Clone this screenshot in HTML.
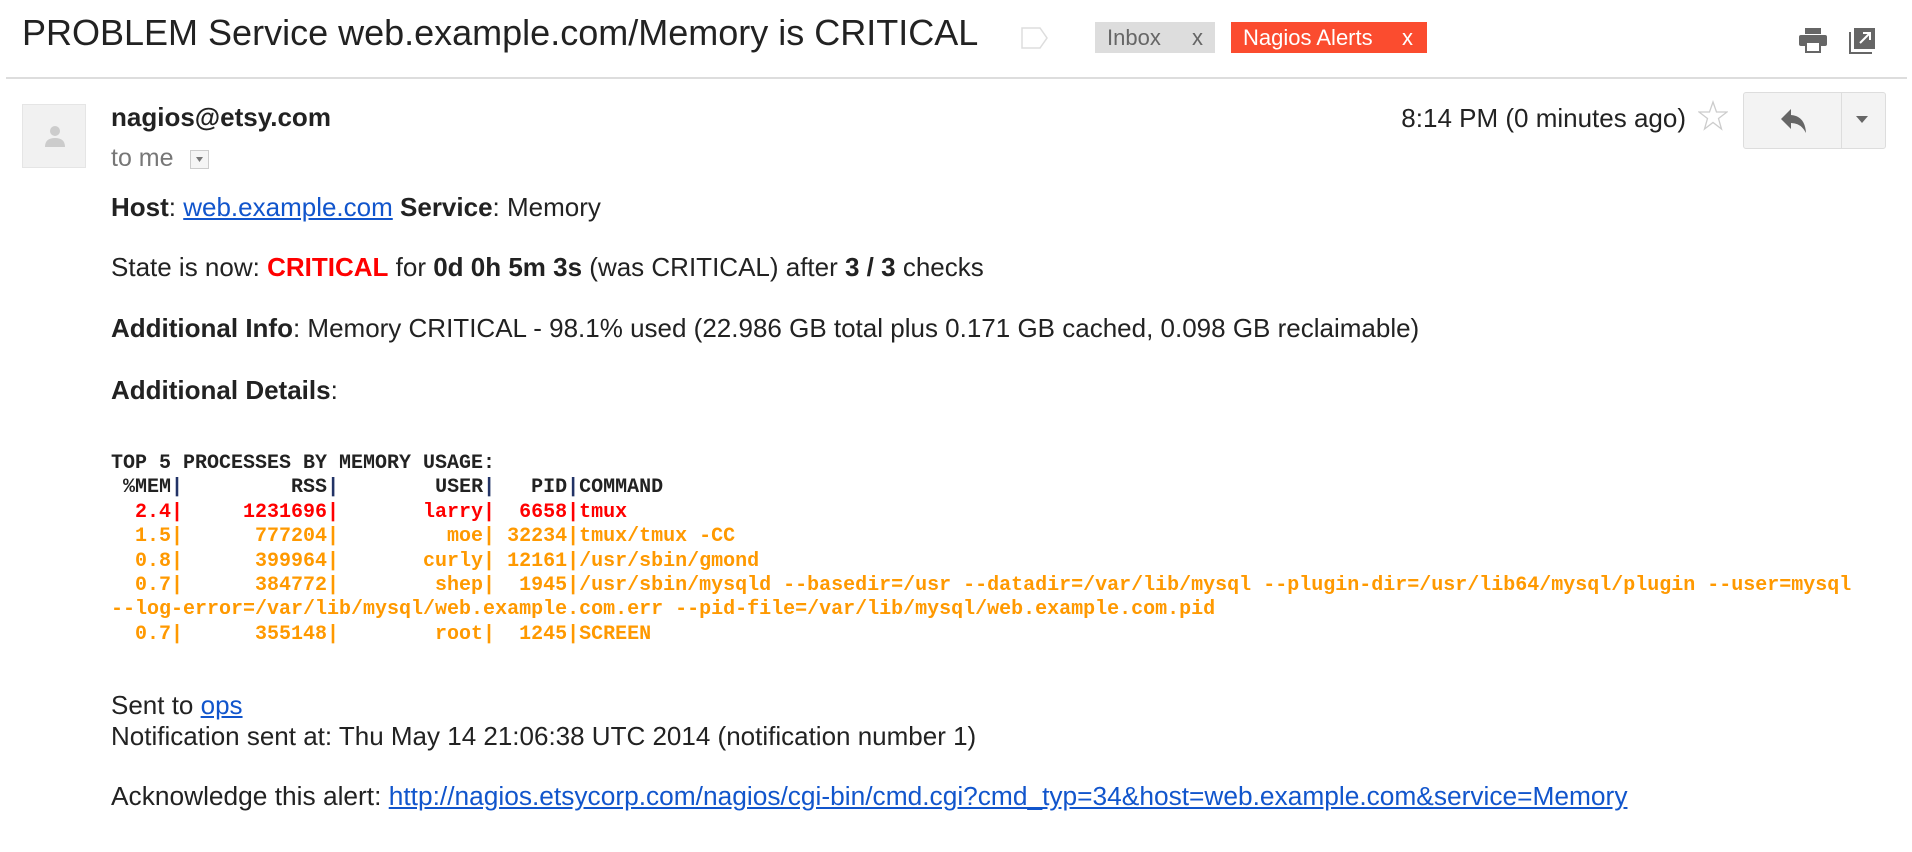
<!DOCTYPE html>
<html><head><meta charset="utf-8"><style>
html,body{margin:0;padding:0;background:#fff;width:1912px;height:852px;overflow:hidden;font-family:"Liberation Sans",Arial,sans-serif;color:#222}
.abs{position:absolute}
.title{left:22px;top:12px;font-size:36px;color:#222;white-space:nowrap}
.tag{top:22px;height:31px;line-height:31px;font-size:22px;padding:0 12px;box-sizing:border-box}
.hr{left:6px;top:77px;width:1901px;height:2px;background:#ddd}
.body{font-size:26px;color:#222;white-space:nowrap}
a{color:#15c;text-decoration:underline}
pre{margin:0;font-family:"Liberation Mono","Courier New",monospace;font-size:20px;line-height:24.4px;font-weight:bold}
.r{color:#f00}.o{color:#f90}
</style></head><body>
<div class="abs title">PROBLEM Service web.example.com/Memory is CRITICAL</div>
<svg class="abs" style="left:1021px;top:27px" width="28" height="22"><path d="M1 1H19L26 11L19 21H1Z" fill="#fff" stroke="#ddd" stroke-width="1.5"/></svg>
<div class="abs tag" style="left:1095px;width:120px;background:#ddd;color:#666">Inbox<span style="position:absolute;right:12px">x</span></div>
<div class="abs tag" style="left:1231px;width:196px;background:#fb4c2f;color:#fff">Nagios Alerts<span style="position:absolute;right:14px">x</span></div>
<svg class="abs" style="left:1798px;top:27px" width="30" height="26" viewBox="0 0 30 26"><rect x="7" y="1" width="16" height="6" fill="#666"/><rect x="1" y="8" width="28" height="11" rx="2" fill="#666"/><rect x="8" y="15" width="14" height="10" fill="#fff" stroke="#666" stroke-width="2"/></svg>
<svg class="abs" style="left:1849px;top:27px" width="28" height="28" viewBox="0 0 28 28"><rect x="5" y="1" width="21" height="21" fill="#666"/><path d="M1 5V26H23" fill="none" stroke="#666" stroke-width="2"/><path d="M11 16L21 6M14 6H21V13" fill="none" stroke="#fff" stroke-width="2"/></svg>
<div class="abs hr"></div>
<div class="abs" style="left:22px;top:104px;width:64px;height:64px;background:#f1f1f1;border:1px solid #e5e5e5;box-sizing:border-box">
<svg width="62" height="62"><circle cx="32" cy="26" r="5" fill="#ccc"/><path d="M22 42Q22 33 32 33Q42 33 42 42Z" fill="#ccc"/></svg></div>
<div class="abs body" style="left:111px;top:102px;font-weight:bold;font-size:26px">nagios@etsy.com</div>
<div class="abs body" style="left:111px;top:144px;color:#777;font-size:25px">to me</div>
<div class="abs" style="left:190px;top:150px;width:19px;height:19px;border:1px solid #ccc;box-sizing:border-box;background:#f5f5f5"><svg width="17" height="17"><path d="M5 6H12L8.5 11Z" fill="#777"/></svg></div>
<div class="abs body" style="right:226px;top:103px;font-size:26px">8:14 PM (0 minutes ago)</div>
<svg class="abs" style="left:1698px;top:100px" width="30" height="32" viewBox="0 0 30 32"><path d="M15 2L18.5 12H29L20.5 18.5L23.5 29L15 22.5L6.5 29L9.5 18.5L1 12H11.5Z" fill="none" stroke="#ccc" stroke-width="1.3"/></svg>
<div class="abs" style="left:1743px;top:92px;width:143px;height:57px;border:1px solid #ddd;border-radius:3px;background:#f3f3f3;box-sizing:border-box">
<div style="position:absolute;left:97px;top:0;width:1px;height:55px;background:#ddd"></div>
<svg style="position:absolute;left:35px;top:14px" width="30" height="28" viewBox="0 0 30 28"><path d="M2 12L12 2V8Q26 9 27 26Q22 16 12 16V22Z" fill="#666"/></svg>
<svg style="position:absolute;left:110px;top:20px" width="16" height="14"><path d="M2 3H14L8 10Z" fill="#666"/></svg>
</div>
<div class="abs body" style="left:111px;top:192px"><b>Host</b>: <a>web.example.com</a> <b>Service</b>: Memory</div>
<div class="abs body" style="left:111px;top:252px">State is now: <b style="color:#f00">CRITICAL</b> for <b>0d 0h 5m 3s</b> (was CRITICAL) after <b>3 / 3</b> checks</div>
<div class="abs body" style="left:111px;top:313px"><b>Additional Info</b>: Memory CRITICAL - 98.1% used (22.986 GB total plus 0.171 GB cached, 0.098 GB reclaimable)</div>
<div class="abs body" style="left:111px;top:375px"><b>Additional Details</b>:</div>
<pre class="abs" style="left:111px;top:452px"><span style="color:#222">TOP 5 PROCESSES BY MEMORY USAGE:
 %MEM<span style="color:#236">|</span>         RSS<span style="color:#236">|</span>        USER<span style="color:#236">|</span>   PID<span style="color:#236">|</span>COMMAND</span>
<span class="r">  2.4|     1231696|       larry|  6658|tmux</span>
<span class="o">  1.5|      777204|         moe| 32234|tmux/tmux -CC
  0.8|      399964|       curly| 12161|/usr/sbin/gmond
  0.7|      384772|        shep|  1945|/usr/sbin/mysqld --basedir=/usr --datadir=/var/lib/mysql --plugin-dir=/usr/lib64/mysql/plugin --user=mysql
--log-error=/var/lib/mysql/web.example.com.err --pid-file=/var/lib/mysql/web.example.com.pid
  0.7|      355148|        root|  1245|SCREEN</span></pre>
<div class="abs body" style="left:111px;top:690px">Sent to <a>ops</a></div>
<div class="abs body" style="left:111px;top:721px">Notification sent at: Thu May 14 21:06:38 UTC 2014 (notification number 1)</div>
<div class="abs body" style="left:111px;top:781px;font-size:26.3px">Acknowledge this alert: <a>http://nagios.etsycorp.com/nagios/cgi-bin/cmd.cgi?cmd_typ=34&amp;host=web.example.com&amp;service=Memory</a></div>
</body></html>
